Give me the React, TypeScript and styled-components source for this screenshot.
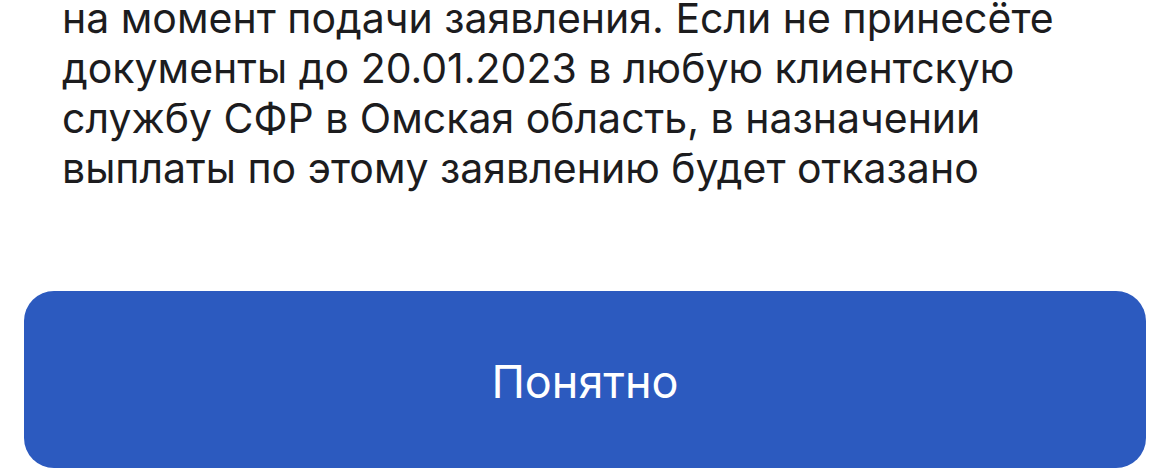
import React from "react";
import styled, { createGlobalStyle } from "styled-components";

const GlobalStyle = createGlobalStyle`
  html, body {
    margin: 0;
    padding: 0;
    background: #ffffff;
  }
  body {
    font-family: Inter, "Noto Sans", "Liberation Sans", sans-serif;
    -webkit-font-smoothing: antialiased;
  }
`;

const Sheet = styled.div`
  width: 1170px;
  height: 470px;
  overflow: hidden;
  display: flex;
  flex-direction: column;
  padding: 0 24px;
  box-sizing: border-box;
`;

const Notice = styled.p`
  margin: -7px 0 0;
  padding: 0 38px;
  font-size: 41px;
  line-height: 50px;
  color: #1c1c1e;
`;

const Line = styled.span`
  display: block;
  white-space: nowrap;
`;

const ConfirmButton = styled.button`
  margin-top: 98px;
  flex: 0 0 auto;
  height: 177px;
  width: 100%;
  border: none;
  border-radius: 30px;
  background: #2c5abf;
  color: #ffffff;
  font-family: inherit;
  font-size: 45px;
  padding: 4px 0 0;
  cursor: pointer;
`;

const lines = [
  "на момент подачи заявления. Если не принесёте",
  "документы до 20.01.2023 в любую клиентскую",
  "службу СФР в Омская область, в назначении",
  "выплаты по этому заявлению будет отказано",
];

export default function App() {
  return (
    <>
      <GlobalStyle />
      <Sheet>
        <Notice>
          {lines.map((l) => (
            <Line key={l}>{l}</Line>
          ))}
        </Notice>
        <ConfirmButton>Понятно</ConfirmButton>
      </Sheet>
    </>
  );
}
